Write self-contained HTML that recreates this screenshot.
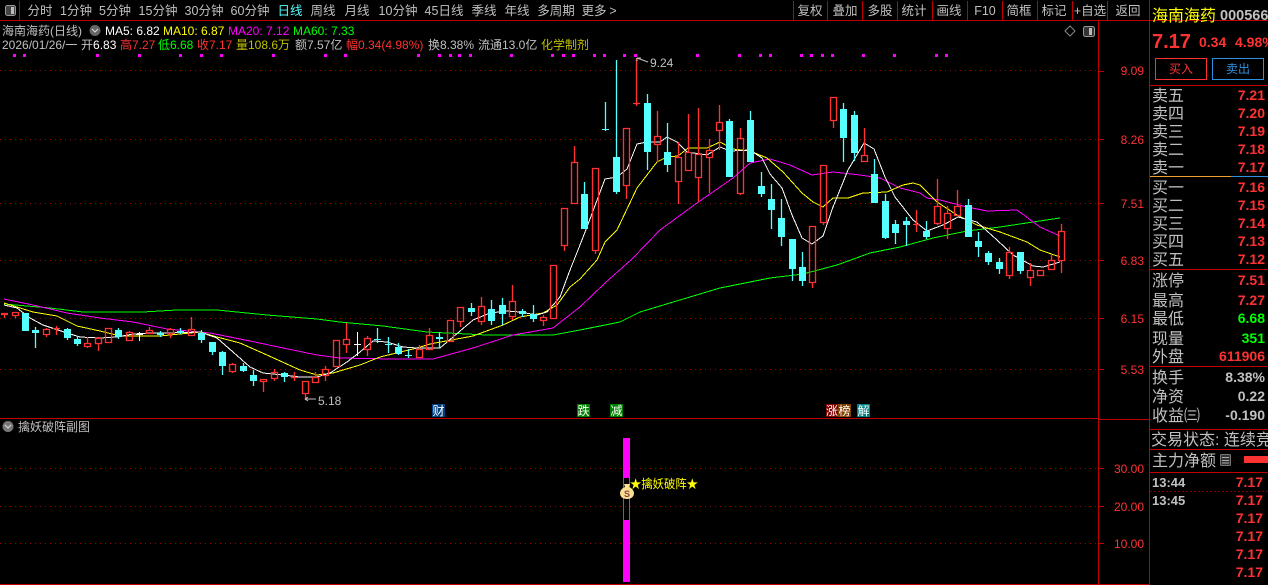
<!DOCTYPE html>
<html lang="zh"><head><meta charset="utf-8"><title>海南海药</title>
<style>
html,body{margin:0;padding:0;background:#000;width:1268px;height:585px;overflow:hidden}
svg{display:block}
text{font-family:"Liberation Sans","WenQuanYi Zen Hei","Noto Sans CJK SC",sans-serif;font-size:12px;fill:#c0c0c0}
.t text{font-size:12.5px;fill:#c0c0c0;text-anchor:middle}
.ax text{fill:#ff3232;text-anchor:end}
.l text{font-size:16px;fill:#c0c0c0}
.v text{font-size:14px;font-weight:bold;fill:#ff3232;text-anchor:end}
.e text{font-size:12px;fill:#fff;text-anchor:middle}
</style></head><body>
<svg width="1268" height="585" viewBox="0 0 1268 585" xmlns="http://www.w3.org/2000/svg">
<rect width="1268" height="585" fill="#000"/>

<!-- frame lines -->
<g stroke="#c00000" stroke-width="1" shape-rendering="crispEdges" fill="none">
<path d="M0 20.5H1268M0 418.5H1098M1098 419.5H1149M0 584.5H1149M19.5 1V20M793.5 1V20M827.5 1V20M862.5 1V20M897.5 1V20M932.5 1V20M967.5 1V20M1002.5 1V20M1037.5 1V20M1072.5 1V20M1107.5 1V20"/>
<path d="M1098.5 21V585M1149.5 0V585M1150 85.5H1268M1150 269.5H1268M1150 366.5H1268M1150 429.5H1268M1150 449.5H1268M1150 472.5H1268"/>
<path d="M1098 71.5H1104M1098 139.5H1104M1098 203.5H1104M1098 260.5H1104M1098 318.5H1104M1098 369.5H1104M1098 468.5H1104M1098 506.5H1104M1098 543.5H1104"/>
<path d="M1150 176.5H1231" stroke="#f0a030"/><path d="M1231 176.5H1268" stroke="#3090e0"/>
<path d="M1150 491.5H1268" stroke="#800000" stroke-dasharray="2 2"/>
</g>
<g stroke="#a00000" stroke-width="1" stroke-dasharray="1 4" shape-rendering="crispEdges" fill="none">
<path d="M0 70.5H1098M0 139.5H1098M0 203.5H1098M0 260.5H1098M0 318.5H1098M0 369.5H1098M0 468.5H1098M0 506.5H1098M0 543.5H1098"/>
</g>

<!-- toolbar -->
<rect x="5.5" y="5.5" width="10" height="10" rx="2" fill="#444" stroke="#999"/><rect x="11" y="7" width="3" height="7" fill="#bbb"/>
<g class="t">
<text x="40" y="15">分时</text><text x="76" y="15">1分钟</text><text x="115" y="15">5分钟</text><text x="158" y="15">15分钟</text><text x="204" y="15">30分钟</text><text x="250" y="15">60分钟</text>
<text x="290" y="15" style="fill:#54ffff">日线</text><text x="323" y="15">周线</text><text x="357" y="15">月线</text><text x="398" y="15">10分钟</text><text x="444" y="15">45日线</text><text x="484" y="15">季线</text><text x="517" y="15">年线</text><text x="556" y="15">多周期</text><text x="594" y="15">更多</text><text x="613" y="15">&gt;</text>
<text x="810" y="15">复权</text><text x="845" y="15">叠加</text><text x="880" y="15">多股</text><text x="914" y="15">统计</text><text x="949" y="15">画线</text><text x="985" y="15">F10</text><text x="1019" y="15">简框</text><text x="1054" y="15">标记</text><text x="1090" y="15">+自选</text><text x="1128" y="15">返回</text>
</g>

<!-- header lines -->
<text x="2" y="35">海南海药(日线)</text>
<circle cx="95" cy="30.5" r="5.5" fill="#666"/><path d="M92 29l3 3 3-3" stroke="#ddd" fill="none"/>
<text x="105" y="35" style="fill:#fff">MA5: 6.82</text><text x="163" y="35" style="fill:#ffff00">MA10: 6.87</text><text x="228" y="35" style="fill:#ff00ff">MA20: 7.12</text><text x="293" y="35" style="fill:#00ff00">MA60: 7.33</text>
<text x="2" y="49">2026/01/26/一</text><text x="81" y="49">开<tspan style="fill:#fff">6.83</tspan></text>
<text x="120" y="49" style="fill:#ff3232">高7.27</text><text x="158" y="49" style="fill:#00ff00">低6.68</text><text x="197" y="49" style="fill:#ff3232">收7.17</text><text x="236" y="49" style="fill:#c0c000">量108.6万</text><text x="295" y="49">额7.57亿</text><text x="346" y="49" style="fill:#ff3232">幅0.34(4.98%)</text><text x="428" y="49">换8.38%</text><text x="478" y="49">流通13.0亿</text><text x="541" y="49" style="fill:#c0c000">化学制剂</text>

<path d="M1070 26l5 5-5 5-5-5z" stroke="#888" fill="none"/>
<rect x="1083.5" y="26.5" width="11" height="10" rx="2" fill="#333" stroke="#999"/><rect x="1089" y="28" width="3" height="7" fill="#bbb"/>

<!-- signal dots -->
<path fill="#ff00ff" shape-rendering="crispEdges" d="M13 54h3v3h-3zM23 54h3v3h-3zM96 54h3v3h-3zM138 54h3v3h-3zM179 54h3v3h-3zM200 54h3v3h-3zM220 54h3v3h-3zM272 54h3v3h-3zM324 54h3v3h-3zM344 54h3v3h-3zM417 54h3v3h-3zM438 54h3v3h-3zM449 54h3v3h-3zM458 54h3v3h-3zM469 54h3v3h-3zM510 54h3v3h-3zM551 54h3v3h-3zM562 54h3v3h-3zM572 54h3v3h-3zM593 54h3v3h-3zM603 54h3v3h-3zM623 54h3v3h-3zM634 54h3v3h-3zM696 54h3v3h-3zM738 54h3v3h-3zM759 54h3v3h-3zM769 54h3v3h-3zM800 54h3v3h-3zM810 54h3v3h-3zM821 54h3v3h-3zM831 54h3v3h-3zM862 54h3v3h-3zM893 54h3v3h-3zM935 54h3v3h-3zM945 54h3v3h-3z"/>

<!-- MA lines -->
<g fill="none" stroke-width="1" shape-rendering="crispEdges" stroke-linejoin="round">
<polyline stroke="#00ff00" points="4,304 50,308 83,312 143,312 177,310 217,310 267,315 317,319 340,322 383,326 427,332 487,335 553,335 580,330 620,322 640,312 680,300 720,288 770,278 803,274 837,265 870,253 900,247 933,238 967,231 1000,227 1033,222 1060,218"/>
<polyline stroke="#ff00ff" points="4,299 33,305 67,313 100,318 133,322 167,329 210,333 250,341 283,348 317,355 340,358 393,359 433,359 473,348 513,335 553,328 567,317 580,307 605,283 632,259 660,230 697,203 733,178 750,163 770,159 790,165 812,175 833,172 860,175 880,178 900,188 920,193 927,198 940,200 967,207 987,211 1017,210 1040,227 1060,236"/>
<polyline stroke="#ffff00" points="4,303 33,312 57,316 77,326 100,331 120,336 160,336 200,332 217,337 240,343 267,355 300,370 317,375 333,373 360,365 380,357 417,348 430,344 473,336 503,325 520,317 543,313 557,305 570,287 580,279 597,260 605,242 617,230 637,188 657,162 667,157 678,156 688,148 707,148 720,142 733,149 750,151 767,158 783,172 802,193 813,202 823,207 833,198 848,198 863,193 887,192 903,185 913,183 920,185 937,202 957,215 977,225 1000,232 1027,242 1040,250 1060,257"/>
<polyline stroke="#ffffff" points="4,305 17,308 30,318 43,325 67,333 80,337 100,338 117,337 133,334 150,333 167,333 200,332 217,338 233,352 250,367 263,373 283,375 300,377 317,377 330,373 347,362 360,352 373,341 387,342 403,347 417,348 440,348 453,337 473,320 490,313 507,311 520,312 537,315 547,312 560,297 570,270 580,245 587,227 605,179 617,177 627,169 637,144 647,142 660,142 667,137 677,142 687,152 707,155 720,147 730,151 750,150 762,158 770,174 782,188 792,215 802,238 812,244 823,236 833,207 848,170 864,143 874,149 885,177 895,197 913,220 927,231 943,225 958,217 977,222 997,240 1013,255 1033,266 1043,267 1060,262"/>
</g>

<!-- cyan candles -->
<path fill="#54ffff" shape-rendering="crispEdges" d="M22 313h7v18h-7zM32 330h7v3h-7zM64 329h7v9h-7zM74 339h7v5h-7zM115 330h7v7h-7zM157 333h7v2h-7zM177 331h7v2h-7zM198 333h7v7h-7zM209 342h7v10h-7zM219 352h7v14h-7zM240 366h7v5h-7zM250 375h7v6h-7zM281 373h7v4h-7zM374 339h7v1h-7zM385 344h7v1h-7zM395 347h7v7h-7zM405 355h7v1h-7zM436 337h7v2h-7zM468 308h7v4h-7zM488 309h7v12h-7zM499 305h7v9h-7zM519 311h7v3h-7zM530 314h7v5h-7zM581 194h7v35h-7zM602 129h7v1h-7zM613 157h7v35h-7zM644 103h7v49h-7zM664 152h7v13h-7zM726 121h7v56h-7zM747 120h7v42h-7zM758 186h7v8h-7zM768 199h7v11h-7zM778 218h7v19h-7zM789 239h7v30h-7zM799 267h7v14h-7zM840 109h7v29h-7zM851 115h7v38h-7zM871 174h7v29h-7zM882 201h7v37h-7zM892 224h7v9h-7zM903 221h7v4h-7zM923 231h7v6h-7zM965 205h7v32h-7zM975 241h7v6h-7zM985 253h7v9h-7zM996 262h7v7h-7zM1017 252h7v19h-7z"/>
<path stroke="#54ffff" stroke-width="1.3" fill="none" d="M35.5 327V348M67.5 328V340M77.5 336V346M118.5 328V339M160.5 331V337M180.5 328V334M201.5 330V343M212.5 342V355M222.5 351V375M243.5 363V372M253.5 370V386M284.5 372V382M377.5 328V343M388.5 337V353M398.5 343V355M408.5 349V358M439.5 332V348M471.5 303V316M491.5 300V325M502.5 298V325M522.5 309V317M533.5 305V322M584.5 182V229M605.5 102V131M616.5 60V194M647.5 94V170M667.5 123V172M729.5 119V177M750.5 111V162M761.5 172V197M771.5 184V229M781.5 199V246M792.5 239V281M802.5 252V286M843.5 103V162M854.5 111V161M874.5 159V203M885.5 194V239M895.5 220V244M906.5 217V246M926.5 221V239M968.5 199V237M978.5 232V257M988.5 251V265M999.5 258V274M1020.5 252V274"/>

<!-- white doji -->
<path stroke="#fff" fill="none" shape-rendering="crispEdges" d="M139.5 332V341M136 334.5H143M357.5 332V356M354 344.5H361"/>

<!-- red candles -->
<path stroke="#ff3232" stroke-width="1.35" fill="none" d="M1 313.5H8M1 314.5H8M4.5 315V318M12.5 312.5H18.5V315.5H12.5ZM15.5 316V318
M43.5 329.5H49.5V334.5H43.5ZM46.5 328V329M46.5 335V337
M53 328.5H60M56.5 326V335
M84.5 343.5H90.5V346.5H84.5ZM87.5 337V343M87.5 347V348
M95.5 338.5H101.5V343.5H95.5ZM98.5 337V338M98.5 344V351
M105.5 328.5H111.5V342.5H105.5Z
M126.5 332.5H132.5V340.5H126.5ZM129.5 331V332
M146.5 330.5H152.5V333.5H146.5ZM149.5 327V330
M167.5 329.5H173.5V333.5H167.5ZM170.5 328V329M170.5 334V338
M188.5 329.5H194.5V335.5H188.5ZM191.5 317V329
M229.5 364.5H235.5V371.5H229.5ZM232.5 363V364M232.5 372V373
M260.5 379.5H266.5V381.5H260.5ZM263.5 382V392
M271.5 372.5H277.5V378.5H271.5ZM274.5 369V372M274.5 379V381
M291 377.5H298M294.5 372V381
M302.5 381.5H308.5V393.5H302.5ZM305.5 394V400
M312.5 377.5H318.5V382.5H312.5ZM315.5 372V377
M322.5 369.5H328.5V375.5H322.5ZM325.5 366V369M325.5 376V381
M333.5 340.5H339.5V366.5H333.5Z
M343.5 339.5H349.5V344.5H343.5ZM346.5 323V339M346.5 345V353
M364.5 338.5H370.5V349.5H364.5ZM367.5 336V338M367.5 350V356
M416.5 349.5H422.5V357.5H416.5ZM419.5 345V349
M426.5 335.5H432.5V349.5H426.5ZM429.5 328V335
M447.5 320.5H453.5V341.5H447.5Z
M457.5 307.5H463.5V321.5H457.5ZM460.5 322V327
M478.5 306.5H484.5V321.5H478.5ZM481.5 297V306M481.5 322V325
M509.5 301.5H515.5V316.5H509.5ZM512.5 285V301M512.5 317V320
M540.5 317.5H546.5V320.5H540.5ZM543.5 315V317M543.5 321V326
M550.5 265.5H556.5V318.5H550.5Z
M561.5 208.5H567.5V245.5H561.5ZM564.5 246V251
M571.5 162.5H577.5V203.5H571.5ZM574.5 146V162
M592.5 168.5H598.5V250.5H592.5ZM595.5 251V254
M623.5 128.5H629.5V185.5H623.5ZM626.5 186V199
M633 103.5H640M636.5 58V106
M654.5 136.5H660.5V144.5H654.5ZM657.5 111V136M657.5 145V162
M675.5 157.5H681.5V181.5H675.5ZM678.5 142V157M678.5 182V204
M685.5 152.5H691.5V170.5H685.5ZM688.5 114V152
M695.5 154.5H701.5V177.5H695.5ZM698.5 108V154M698.5 178V202
M706.5 150.5H712.5V157.5H706.5ZM709.5 139V150M709.5 158V193
M716.5 122.5H722.5V130.5H716.5ZM719.5 105V122M719.5 131V150
M737.5 138.5H743.5V193.5H737.5ZM740.5 128V138M740.5 194V195
M809.5 226.5H815.5V282.5H809.5ZM812.5 283V288
M820.5 165.5H826.5V222.5H820.5ZM823.5 223V225
M830.5 97.5H836.5V120.5H830.5ZM833.5 121V128
M861.5 155.5H867.5V161.5H861.5ZM864.5 128V155
M913 224.5H920M916.5 210V232
M934.5 206.5H940.5V223.5H934.5ZM937.5 179V206M937.5 224V225
M944.5 213.5H950.5V228.5H944.5ZM947.5 206V213M947.5 229V239
M954.5 206.5H960.5V215.5H954.5ZM957.5 190V206
M1006.5 252.5H1012.5V275.5H1006.5ZM1009.5 247V252M1009.5 276V279
M1027.5 270.5H1033.5V277.5H1027.5ZM1030.5 263V270M1030.5 278V286
M1037.5 270.5H1043.5V275.5H1037.5Z
M1048.5 260.5H1054.5V269.5H1048.5ZM1051.5 255V260
M1058.5 231.5H1064.5V260.5H1058.5ZM1061.5 224V231M1061.5 261V273"/>

<!-- extreme labels -->
<path stroke="#c0c0c0" fill="none" d="M637 58l11 4M637 58h4M637 58v3M305 399h11M305 399l3-2M305 399l3 2"/>
<text x="650" y="67">9.24</text><text x="318" y="405">5.18</text>

<!-- event tags -->
<g shape-rendering="crispEdges">
<rect x="432" y="404" width="13" height="13" fill="#004080"/><rect x="577" y="404" width="13" height="13" fill="#008000"/><rect x="610" y="404" width="13" height="13" fill="#008000"/><rect x="826" y="404" width="12" height="13" fill="#800000"/><rect x="838" y="404" width="13" height="13" fill="#804000"/><rect x="857" y="404" width="13" height="13" fill="#008080"/>
</g>
<g class="e"><text x="438.500" y="415">财</text><text x="583.500" y="415">跌</text><text x="616.500" y="415">减</text><text x="832" y="415">涨</text><text x="844.500" y="415">榜</text><text x="863.500" y="415">解</text></g>

<!-- axis labels -->
<g class="ax">
<text x="1144" y="75">9.09</text><text x="1144" y="144">8.26</text><text x="1144" y="208">7.51</text><text x="1144" y="265">6.83</text><text x="1144" y="323">6.15</text><text x="1144" y="374">5.53</text><text x="1144" y="473">30.00</text><text x="1144" y="511">20.00</text><text x="1144" y="548">10.00</text>
</g>

<!-- sub panel -->
<circle cx="8" cy="426.500" r="5.500" fill="#777"/><path d="M5 425l3 3 3-3" stroke="#ddd" fill="none"/>
<text x="18" y="431">擒妖破阵副图</text>
<g shape-rendering="crispEdges">
<rect x="623" y="438" width="7" height="39" fill="#ff00ff"/><rect x="623" y="521" width="7" height="61" fill="#ff00ff"/>
<rect x="623.500" y="477.500" width="6" height="43" fill="none" stroke="#ff00ff"/>
</g>
<path d="M624 484h6l-1 3c3 1 5 4 5 6 0 4-3 6-7 6s-7-2-7-6c0-2 2-5 5-6z" fill="#f8e090"/>
<text x="627" y="497" text-anchor="middle" style="font-size:9px;font-weight:bold;fill:#904040">S</text>
<text x="630" y="488" textLength="68" lengthAdjust="spacingAndGlyphs" style="fill:#ffff00">★擒妖破阵★</text>

<!-- right panel -->
<text x="1152" y="21" style="font-size:16px;fill:#ffff00">海南海药</text>
<text x="1220" y="20" style="font-size:14.500px;font-weight:bold;fill:#c0c0c0">000566</text>
<text x="1152" y="48" style="font-size:20px;font-weight:bold;fill:#ff3232">7.17</text>
<text x="1199" y="47" style="font-size:14px;font-weight:bold;fill:#ff3232">0.34</text>
<text x="1235" y="47" style="font-size:14px;font-weight:bold;fill:#ff3232">4.98%</text>
<rect x="1155.500" y="58.500" width="51" height="21" fill="none" stroke="#ff3232"/>
<rect x="1212.500" y="58.500" width="51" height="21" fill="none" stroke="#3090e0"/>
<text x="1169" y="73" style="fill:#ff3232">买入</text><text x="1226" y="73" style="fill:#3090e0">卖出</text>

<g class="l">
<text x="1152" y="101">卖五</text><text x="1152" y="119">卖四</text><text x="1152" y="137">卖三</text><text x="1152" y="155">卖二</text><text x="1152" y="173">卖一</text>
<text x="1152" y="193">买一</text><text x="1152" y="211">买二</text><text x="1152" y="229">买三</text><text x="1152" y="247">买四</text><text x="1152" y="265">买五</text>
<text x="1152" y="286">涨停</text><text x="1152" y="306">最高</text><text x="1152" y="324">最低</text><text x="1152" y="344">现量</text><text x="1152" y="362">外盘</text>
<text x="1152" y="383">换手</text><text x="1152" y="402">净资</text><text x="1152" y="421">收益㈢</text>
<text x="1151" y="445">交易状态: 连续竞</text>
<text x="1152" y="466">主力净额</text>
</g>
<g class="v">
<text x="1265" y="100">7.21</text><text x="1265" y="118">7.20</text><text x="1265" y="136">7.19</text><text x="1265" y="154">7.18</text><text x="1265" y="172">7.17</text>
<text x="1265" y="192">7.16</text><text x="1265" y="210">7.15</text><text x="1265" y="228">7.14</text><text x="1265" y="246">7.13</text><text x="1265" y="264">7.12</text>
<text x="1265" y="285">7.51</text><text x="1265" y="305">7.27</text><text x="1265" y="323" style="fill:#00ff00">6.68</text><text x="1265" y="343" style="fill:#00ff00">351</text><text x="1265" y="361">611906</text>
<text x="1265" y="382" style="fill:#c0c0c0">8.38%</text><text x="1265" y="401" style="fill:#c0c0c0">0.22</text><text x="1265" y="420" style="fill:#c0c0c0">-0.190</text>
<text x="1263" y="487">7.17</text><text x="1263" y="505">7.17</text><text x="1263" y="523">7.17</text><text x="1263" y="541">7.17</text><text x="1263" y="559">7.17</text><text x="1263" y="577">7.17</text>
</g>
<rect x="1220.500" y="454.500" width="10" height="11" rx="1" fill="#333" stroke="#777"/><path d="M1222 457.500h7M1222 460.500h7M1222 463h7" stroke="#aaa"/>
<rect x="1244" y="456" width="24" height="7" fill="#ff3232"/>
<text x="1152" y="487" style="font-size:13px;font-weight:bold;fill:#c0c0c0">13:44</text>
<text x="1152" y="505" style="font-size:13px;font-weight:bold;fill:#c0c0c0">13:45</text>
</svg>
</body></html>
